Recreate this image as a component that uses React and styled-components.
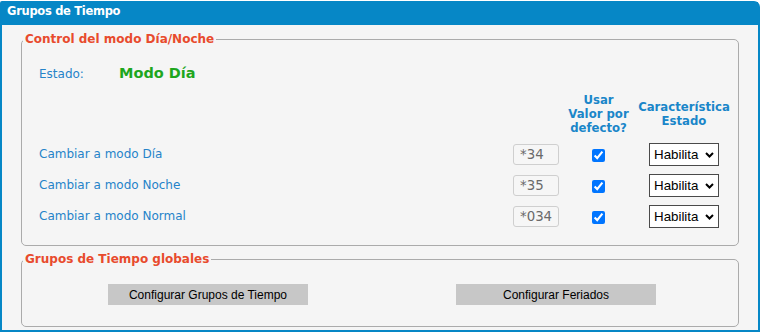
import React from "react";
import styled, { createGlobalStyle } from "styled-components";

const Global = createGlobalStyle`
  html, body { margin: 0; padding: 0; background: #ffffff; }
  body { padding-top: 1px; font-family: "DejaVu Sans", Verdana, sans-serif; }
  * { box-sizing: border-box; }
`;

const Panel = styled.section`
  width: 760px;
  height: 331px;
  border: 2px solid #0687c6;
  border-radius: 2px 6px 0 0;
  background: #f5f5f5;
  display: flex;
  flex-direction: column;
`;

const TitleBar = styled.header`
  height: 23px;
  background: #0687c6;
  color: #ffffff;
  font-family: "DejaVu Sans", Verdana, sans-serif;
  font-weight: bold;
  font-size: 11.5px;
  letter-spacing: -0.3px;
  line-height: 17px;
  padding: 1px 0 0 5px;
  margin-top: -1px;
`;

const Body = styled.div`
  display: flex;
  flex-direction: column;
  gap: 5px;
  padding: 6px 19px 0;
`;

const Fieldset = styled.fieldset`
  margin: 0;
  padding: 0 1px ${(p) => p.$pb}px;
  border: 1px solid #ababab;
  border-radius: 5px;
  min-width: 0;
`;

const Legend = styled.legend`
  padding: 0 2px;
  font-family: "DejaVu Sans", Verdana, sans-serif;
  font-weight: bold;
  font-size: 12px;
  line-height: 16px;
  color: #e84b2d;
`;

const StatusRow = styled.div`
  display: flex;
  align-items: baseline;
  height: 20px;
  line-height: 20px;
  margin: 16px 0 10px 16px;
`;

const StatusLabel = styled.span`
  width: 80px;
  font-size: 12px;
  color: #2583c9;
`;

const StatusValue = styled.span`
  font-size: 14.5px;
  font-weight: bold;
  color: #1ea61e;
`;

const Grid = styled.div`
  display: grid;
  grid-template-columns: 1fr 48px 75px 96px;
  grid-template-rows: 46px repeat(3, 31px);
  margin: 0 5px 0 16px;
`;

const HeadCell = styled.div`
  grid-column: ${(p) => p.$col};
  grid-row: 1;
  align-self: center;
  margin-bottom: 4px;
  text-align: center;
  font-weight: bold;
  font-size: 11.7px;
  line-height: 14px;
  color: #1a86c9;
`;

const RowLabel = styled.div`
  grid-column: 1;
  grid-row: ${(p) => p.$row};
  align-self: center;
  font-size: 12px;
  line-height: 31px;
  color: #2583c9;
`;

const CodeInput = styled.input`
  grid-column: 2;
  grid-row: ${(p) => p.$row};
  align-self: center;
  width: 46px;
  height: 21px;
  margin: 0;
  padding: 0 0 0 6px;
  border: 1px solid #cfcfcf;
  border-radius: 3px;
  background: #f6f6f6;
  color: #6a6a6a;
  font-family: "DejaVu Sans", Verdana, sans-serif;
  font-size: 13.333px;
  outline: none;
`;

const Check = styled.input`
  grid-column: 3;
  grid-row: ${(p) => p.$row};
  justify-self: center;
  align-self: center;
  width: 13px;
  height: 13px;
  margin: 1px 0 0;
`;

const SelectWrap = styled.div`
  grid-column: 4;
  grid-row: ${(p) => p.$row};
  justify-self: center;
  align-self: center;
  position: relative;
  width: 70px;
  height: 23px;
`;

const Select = styled.select`
  appearance: none;
  -webkit-appearance: none;
  display: block;
  width: 100%;
  height: 100%;
  margin: 0;
  padding: 0 0 0 4px;
  font-family: "Liberation Sans", Arial, sans-serif;
  font-size: 13.333px;
  color: #000;
  background: #fff;
  border: 1px solid #4a4a4a;
  border-radius: 0;
  outline: none;
`;

const Chevron = styled.svg`
  position: absolute;
  right: 5px;
  top: 9px;
  width: 9px;
  height: 6px;
  pointer-events: none;
`;

const ButtonRow = styled.div`
  display: grid;
  grid-template-columns: 1fr 1fr;
  margin: 17px 7px 0 11px;
`;

const Button = styled.button`
  justify-self: center;
  width: 200px;
  height: 21px;
  border: none;
  background: #c7c7c7;
  color: #000;
  font-family: "Liberation Sans", Arial, sans-serif;
  font-size: 12px;
  padding: 0;
`;

const rows = [
  { label: "Cambiar a modo Día", code: "*34" },
  { label: "Cambiar a modo Noche", code: "*35" },
  { label: "Cambiar a modo Normal", code: "*034" },
];

export default function App() {
  return (
    <>
      <Global />
      <Panel>
        <TitleBar>Grupos de Tiempo</TitleBar>
        <Body>
          <Fieldset $pb={13}>
            <Legend>Control del modo Día/Noche</Legend>
            <StatusRow>
              <StatusLabel>Estado:</StatusLabel>
              <StatusValue>Modo Día</StatusValue>
            </StatusRow>
            <Grid>
              <HeadCell $col={3}>
                Usar
                <br />
                Valor por
                <br />
                defecto?
              </HeadCell>
              <HeadCell $col={4}>
                Característica
                <br />
                Estado
              </HeadCell>
              {rows.map((r, i) => (
                <React.Fragment key={r.code}>
                  <RowLabel $row={i + 2}>{r.label}</RowLabel>
                  <CodeInput $row={i + 2} type="text" value={r.code} readOnly />
                  <Check $row={i + 2} type="checkbox" checked readOnly />
                  <SelectWrap $row={i + 2}>
                    <Select defaultValue="1">
                      <option value="1">Habilita</option>
                      <option value="0">Deshabilita</option>
                    </Select>
                    <Chevron viewBox="0 0 9 6" aria-hidden="true">
                      <path
                        d="M1 1 L4.5 4.5 L8 1"
                        fill="none"
                        stroke="#000"
                        strokeWidth="2"
                      />
                    </Chevron>
                  </SelectWrap>
                </React.Fragment>
              ))}
            </Grid>
          </Fieldset>
          <Fieldset $pb={21}>
            <Legend>Grupos de Tiempo globales</Legend>
            <ButtonRow>
              <Button type="button">Configurar Grupos de Tiempo</Button>
              <Button type="button">Configurar Feriados</Button>
            </ButtonRow>
          </Fieldset>
        </Body>
      </Panel>
    </>
  );
}
